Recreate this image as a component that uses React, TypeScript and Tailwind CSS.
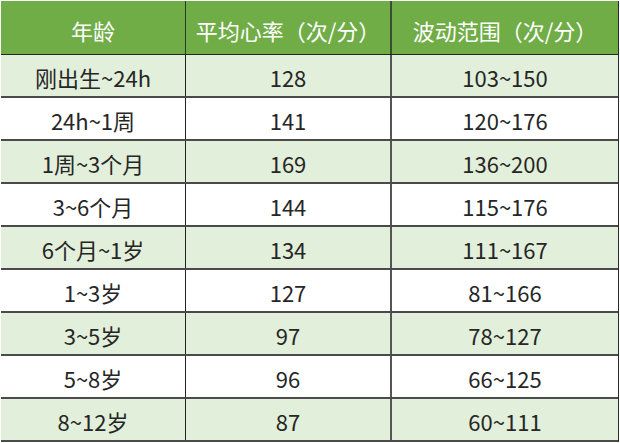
import React from "react";

const rows: [string, string, string][] = [
  ["刚出生~24h", "128", "103~150"],
  ["24h~1周", "141", "120~176"],
  ["1周~3个月", "169", "136~200"],
  ["3~6个月", "144", "115~176"],
  ["6个月~1岁", "134", "111~167"],
  ["1~3岁", "127", "81~166"],
  ["3~5岁", "97", "78~127"],
  ["5~8岁", "96", "66~125"],
  ["8~12岁", "87", "60~111"],
];

export default function App() {
  return (
    <div
      className="w-[620px] h-[443px] bg-white pl-px pt-px overflow-hidden"
      style={{ fontFamily: '"Noto Sans CJK SC", "Microsoft YaHei", sans-serif' }}
    >
      <div className="w-[618px] border-r border-[#2a2a2a]">
        <div className="flex h-[54px] bg-[#70ad47] border-b border-[#1f2a18] text-white text-[22px] leading-none">
          <div className="w-[185px] flex items-center justify-center pt-[5px] border-r border-[#2b3a22]">年龄</div>
          <div className="w-[206px] flex items-center justify-center pt-[5px] border-r-2 border-[#3d4d33]">平均心率（次/分）</div>
          <div className="flex-1 flex items-center justify-center pt-[5px]">波动范围（次/分）</div>
        </div>
        {rows.map((r, i) => (
          <div
            key={i}
            className={`flex h-[43px] border-b-2 border-[#4a4a4a] text-[22px] leading-none text-[#262626] ${
              i % 2 === 0 ? "bg-[#e2efda]" : "bg-white"
            }`}
          >
            <div className="w-[185px] flex items-center justify-center pt-[3px] border-r border-[#222]">{r[0]}</div>
            <div className="w-[206px] flex items-center justify-center pt-[3px] border-r-2 border-[#555]">{r[1]}</div>
            <div className="flex-1 flex items-center justify-center pt-[3px]">{r[2]}</div>
          </div>
        ))}
      </div>
    </div>
  );
}
